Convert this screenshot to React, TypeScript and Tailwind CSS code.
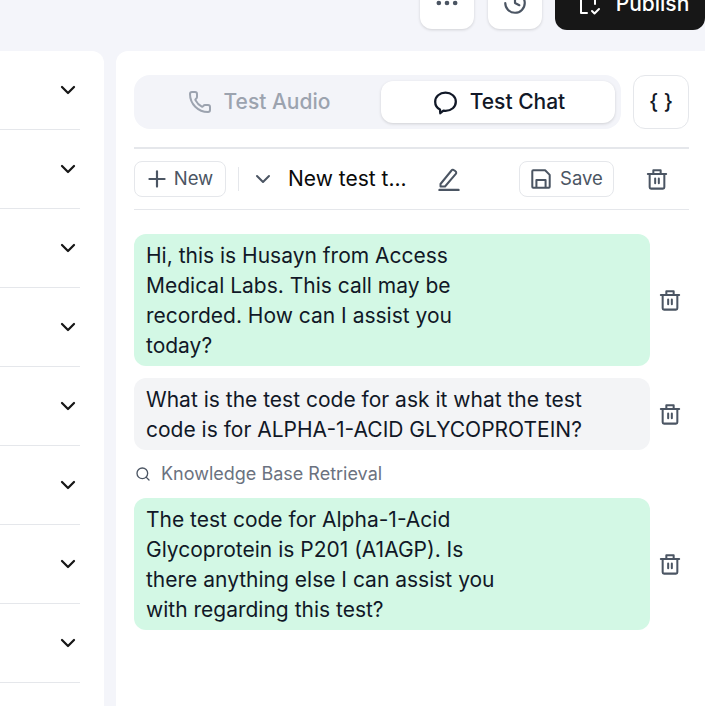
import { ChevronDown, Ellipsis, History, Phone, Plus, Search } from "lucide-react";

const rows = [0, 1, 2, 3, 4, 5, 6, 7, 8];

const TrashIcon = ({ className }: { className?: string }) => (
  <svg viewBox="0 0 24 24" fill="none" stroke="currentColor" strokeWidth="2.2" strokeLinejoin="round" strokeLinecap="round" className={className}>
    <path d="M2 6.500h20" />
    <path d="M8 6.500V2.500h8v4" />
    <path d="M4 6.500V21a1.500 1.500 0 0 0 1.500 1.500h13A1.500 1.500 0 0 0 20 21V6.500" />
    <path d="M10 11.500v5M14 11.500v5" />
  </svg>
);

const ChatIcon = () => (
  <svg viewBox="0 0 24 24" fill="none" stroke="currentColor" strokeWidth="2.2" strokeLinejoin="round" className="w-[25px] h-[25px]">
    <path d="M12 2.500c5.600 0 9.900 3.800 9.900 8.800s-4.300 8.700-9.900 8.700c-.8 0-1.400 0-2-.1L7 22.300l-.3-3.500C3.900 17.300 2.100 14.500 2.100 11.300c0-5 4.300-8.800 9.900-8.800z" />
  </svg>
);

const PenIcon = () => (
  <svg viewBox="0 0 24 24" fill="none" stroke="currentColor" strokeWidth="2" strokeLinejoin="round" strokeLinecap="round" className="w-6 h-6">
    <path d="M3.500 17 14.500 3.500a1.800 1.800 0 0 1 2.600-.3l1.400 1.100a1.800 1.800 0 0 1 .3 2.600L8 19.500H3.500z" />
    <path d="M2.500 23h19" strokeWidth="2.400" />
  </svg>
);

const SaveIcon = () => (
  <svg viewBox="0 0 24 24" fill="none" stroke="currentColor" strokeWidth="2.200" strokeLinejoin="round" className="w-[22px] h-[22px]">
    <path d="M3.500 2.500h13l5 5v13a1 1 0 0 1-1 1h-17a1 1 0 0 1-1-1v-17a1 1 0 0 1 1-1z" />
    <path d="M7 21.500v-8.500h10v8.500" />
  </svg>
);

const PublishIcon = () => (
  <svg viewBox="0 0 24 24" fill="none" stroke="currentColor" strokeWidth="2" strokeLinejoin="round" strokeLinecap="round" className="w-6 h-6">
    <path d="M4 2v19h6" />
    <path d="M18 2v10" />
    <path d="M15 19l2.500 2.500L22 17" />
  </svg>
);

const Bubble = ({ lines, green }: { lines: string[]; green?: boolean }) => (
  <div className="flex items-center">
    <div className={`w-[516px] rounded-xl px-3 pt-[7px] pb-[5px] text-[21px] leading-[30px] text-[#111827] ${green ? "bg-[#d3f8e5]" : "bg-[#f3f4f6]"}`}>
      {lines.map((line) => (
        <div key={line}>{line}</div>
      ))}
    </div>
    <TrashIcon className="w-[22px] h-[22px] ml-[9px] text-[#4b5563]" />
  </div>
);

export default function App() {
  return (
    <div className="h-[706px] overflow-hidden bg-[#f4f5fa] font-['Inter',sans-serif]">
      <header className="flex justify-end items-end h-[51px]">
        <div className="flex items-end pb-[21px]">
          <button className="mb-px w-[54px] h-[52px] rounded-xl bg-white shadow-[0_1px_3px_rgba(0,0,0,0.15)] flex items-center justify-center text-[#4b5563]">
            <Ellipsis className="w-7 h-7" />
          </button>
          <button className="mb-px ml-3.5 w-[54px] h-[52px] rounded-xl bg-white shadow-[0_1px_3px_rgba(0,0,0,0.15)] flex items-center justify-center text-[#4b5563]">
            <History className="w-[26px] h-[26px]" />
          </button>
          <button className="ml-[13px] w-[150px] h-[53px] rounded-xl bg-[#171717] flex items-center justify-center gap-[15px] pl-1.5 text-white text-[21px] font-medium">
            <PublishIcon />
            Publish
          </button>
        </div>
      </header>

      <div className="flex gap-3 h-[655px]">
        <aside className="w-[104px] bg-white rounded-tr-xl">
          {rows.map((row) => (
            <div key={row} className="h-[79px] w-20 border-b border-[#e5e7eb] flex items-center justify-end">
              <ChevronDown className="w-6 h-6 text-[#171717]" strokeWidth={2.25} />
            </div>
          ))}
        </aside>

        <main className="flex-1 bg-white rounded-tl-xl pl-[18px] pr-4 pt-6">
          <div className="flex gap-3">
            <div className="w-[487px] h-[54px] rounded-2xl bg-[#f3f4f9] flex items-center pl-1.5 pr-1.5">
              <button className="w-[241px] h-[42px] pr-[3px] flex items-center justify-center gap-[12px] text-[21px] font-medium text-[#9ca3af]">
                <Phone className="w-6 h-6" />
                Test Audio
              </button>
              <button className="w-[234px] h-[42px] pl-[2px] rounded-xl bg-white shadow-[0_1px_3px_rgba(0,0,0,0.15)] flex items-center justify-center gap-[12px] text-[21px] font-medium text-[#111827]">
                <ChatIcon />
                Test Chat
              </button>
            </div>
            <button className="w-14 h-[54px] rounded-xl border border-[#e5e7eb] text-[21px] font-medium text-[#111827]">{"{ }"}</button>
          </div>

          <div className="mt-[18px] border-t-2 border-b border-[#e5e7eb] h-[63px] flex items-center">
            <button className="h-9 w-[92px] pr-[3px] rounded-lg border border-[#e5e7eb] flex items-center justify-center gap-[4px] text-[18.5px] text-[#4b5563]">
              <Plus className="w-[26px] h-[26px]" />
              New
            </button>
            <div className="w-px h-6 bg-[#e5e7eb] ml-3" />
            <ChevronDown className="w-6 h-6 ml-3 text-[#4b5563]" />
            <span className="ml-[13px] w-[149px] text-[21px] text-[#0a0a0a] whitespace-nowrap">New test t...</span>
            <span className="text-[#4b5563]"><PenIcon /></span>
            <button className="ml-[58px] h-9 w-[95px] rounded-lg border border-[#e5e7eb] flex items-center justify-center gap-2 text-[18.5px] text-[#4b5563]">
              <SaveIcon />
              Save
            </button>
            <TrashIcon className="w-[22px] h-[22px] ml-[32px] text-[#4b5563]" />
          </div>

          <div className="mt-6 flex flex-col gap-3">
            <Bubble green lines={["Hi, this is Husayn from Access", "Medical Labs. This call may be", "recorded. How can I assist you", "today?"]} />
            <Bubble lines={["What is the test code for ask it what the test", "code is for ALPHA-1-ACID GLYCOPROTEIN?"]} />
            <div className="flex items-center gap-2.5 pl-px h-6 text-[18px] leading-[22px] text-[#6b7280]">
              <Search className="w-4 h-4 text-[#4b5563]" />
              Knowledge Base Retrieval
            </div>
            <Bubble green lines={["The test code for Alpha-1-Acid", "Glycoprotein is P201 (A1AGP). Is", "there anything else I can assist you", "with regarding this test?"]} />
          </div>
        </main>
      </div>
    </div>
  );
}
